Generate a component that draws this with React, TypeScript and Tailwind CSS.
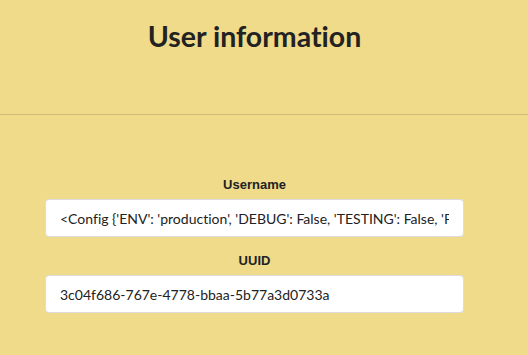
import React from 'react';

const fields = [
  {
    label: 'Username',
    value: "<Config {'ENV': 'production', 'DEBUG': False, 'TESTING': False, 'PROPAGATE_EXCEPTIONS': None, 'SECRET_KEY': 'redacted'}>",
  },
  { label: 'UUID', value: '3c04f686-767e-4778-bbaa-5b77a3d0733a' },
];

export default function App() {
  return (
    <div className="min-h-[355px] w-[528px] bg-[#efdb8a] font-['Lato',sans-serif] text-[#222] [font-variant-ligatures:none]">
      {/* Header */}
      <div className="h-[114px] pt-[16px] w-[509px] text-center">
        <h1 className="text-[28.5px] font-bold leading-[40px] text-[#222]">User information</h1>
      </div>
      <hr className="border-0 border-t border-[#cdbb78]" />

      {/* Fields */}
      <div className="pt-[60px] pl-[45px] w-[464px] flex flex-col">
        {fields.map((f, i) => (
          <div key={f.label} className={`flex flex-col items-center ${i > 0 ? 'mt-[14px]' : ''}`}>
            <label className="font-['Liberation_Sans',Arial,sans-serif] text-[13px] font-bold leading-[20px] text-[#222]">
              {f.label}
            </label>
            <input
              readOnly
              value={f.value}
              className="mt-[4px] w-full h-[38px] rounded-[4px] border border-[#dcdcdc] bg-white px-[14px] text-[14px] text-[#222] outline-none font-['Lato',sans-serif] [font-variant-ligatures:none]"
            />
          </div>
        ))}
      </div>
    </div>
  );
}
